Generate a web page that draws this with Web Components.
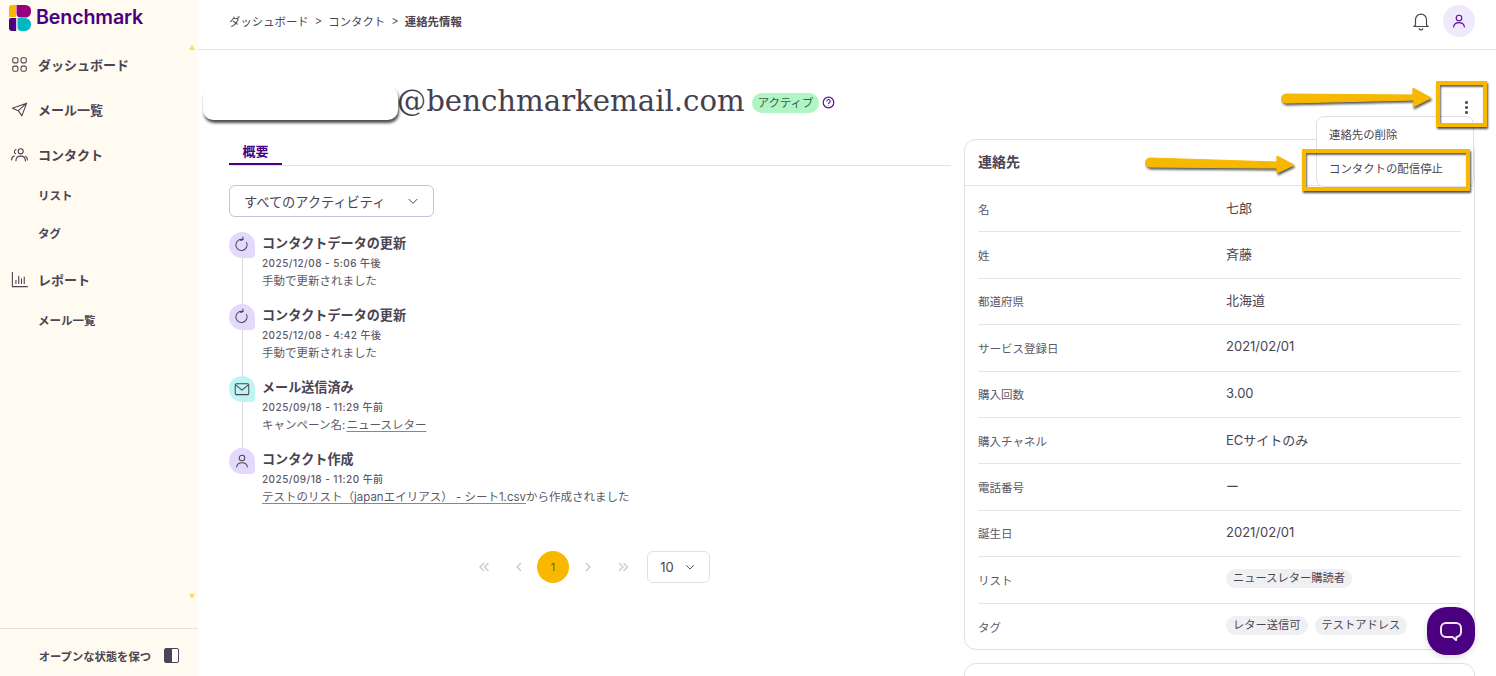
<!DOCTYPE html>
<html lang="ja"><head><meta charset="utf-8"><title>連絡先情報</title>
<style>
html,body{margin:0;padding:0;height:676px;overflow:hidden;background:#fff}
body{font-family:"Inter","Noto Sans CJK JP",sans-serif;color:#4a4453}
</style></head><body>
<app-shell>
  <app-sidebar slot="side"></app-sidebar>
  <app-topbar slot="top"></app-topbar>
  <contact-page slot="main"></contact-page>
</app-shell>
<script>
const I={
grid:'<rect x="3.5" y="3.5" width="6.5" height="6.5" rx="1.8"/><rect x="14" y="3.5" width="6.5" height="6.5" rx="1.8"/><rect x="3.5" y="14" width="6.5" height="6.5" rx="1.8"/><rect x="14" y="14" width="6.5" height="6.5" rx="1.8"/>',
plane:'<path d="M21 4 3 10.5l7.5 3L15 20zM21 4l-10.5 9.5"/>',
users:'<circle cx="13.5" cy="8" r="3.2"/><path d="M7.5 20c0-3.6 2.6-6 6-6s6 2.4 6 6.2M22 19c0-2.2-.7-3.7-2.2-4.7M7.5 5.6A3 3 0 0 0 7 11M2 19c0-2.6 1.2-4.4 3.4-5"/>',
chart:'<path d="M3 3v18h19M7.5 17v-4M11 17V8M14.500 17v-6M18 17V9"/>',
bell:'<path d="M6 16.500V10.500a6 6 0 0 1 12 0v6l1.800 1.500H4.200zM10 20.500a2.200 2.200 0 0 0 4 0"/>',
user:'<circle cx="12" cy="8" r="3.700"/><path d="M4.800 20c.4-3.800 3.400-5.800 7.200-5.800s6.800 2 7.200 5.800"/>',
refresh:'<path d="M18 8.500a7.500 7.500 0 1 1-4.500-3.800M13.200 1.500l.4 3.300L10.300 6"/>',
mail:'<rect x="3" y="5" width="18" height="14.500" rx="1.500"/><path d="m3.500 6.500 8.500 7 8.500-7"/>',
down:'<path d="m6 9.500 6 6 6-6"/>'
};
const svg=(n,s=18,w=1.5,c='currentColor')=>`<svg width="${s}" height="${s}" viewBox="0 0 24 24" fill="none" stroke="${c}" stroke-width="${w}" stroke-linecap="round" stroke-linejoin="round">${I[n]}</svg>`;
function def(name,css,html){
  customElements.define(name,class extends HTMLElement{
    connectedCallback(){
      if(this.shadowRoot)return;
      const r=this.attachShadow({mode:'open'});
      const a=k=>this.getAttribute(k)||'';
      r.innerHTML=`<style>${css}</style>`+(typeof html==='function'?html(a,this):html);
    }
  });
}
def('app-shell',`:host{display:grid;grid-template-columns:198px 1fr;grid-template-rows:50px 626px;width:1496px;height:676px;overflow:hidden}
.s{grid-row:1/3;display:block}`,`<div class="s"><slot name="side"></slot></div><slot name="top"></slot><slot name="main"></slot>`);

def('nav-item',`:host{display:flex;align-items:center;font-size:var(--fs,13px);font-weight:var(--fw,600);color:#4a4453;height:var(--h,45px);padding-left:10px;gap:9px}
.i{width:19px;height:19px;display:flex;flex:none}
:host([sub]){--fs:11.500px;padding-left:38px}
:host([sub]) .i{display:none}`,(a)=>`<span class="i">${a('icon')?svg(a('icon'),19,1.4):''}</span><slot></slot>`);

def('app-sidebar',`:host{display:flex;flex-direction:column;height:676px;background:#fffbf0;position:relative}
.logo{display:flex;align-items:center;gap:5px;height:41px;padding:0 0 0 9px;flex:none;color:#4b0082;font:600 19.700px "Inter",sans-serif;letter-spacing:-.17px}
nav{flex:1;display:flex;flex-direction:column}
.foot{height:48px;border-top:1px solid #e3e0de;display:flex;align-items:center;justify-content:flex-end;gap:13px;padding:6px 19px 0 0;box-sizing:border-box;font-size:11.300px;font-weight:600;color:#4a4453}
.pan{width:15px;height:15px;border:1.500px solid #4a4453;border-radius:2px;background:linear-gradient(90deg,#4a4453 50%,#fff 50%);box-sizing:border-box}
.tri{position:absolute;left:189px;width:0;height:0;border-left:3.500px solid transparent;border-right:3.500px solid transparent}
.up{top:45px;border-bottom:5px solid #ffd966}.dn{top:594px;border-top:5px solid #ffd966}`,`<div class="logo"><svg width="22" height="26" viewBox="0 0 22 26" style="margin-top:-5px;flex:none">
<path d="M0 3a3 3 0 0 1 3-3h4v12H0z" fill="#f9b800"/><path d="M7.500 0h9a5.500 5.500 0 0 1 5.500 5.500V7a5.500 5.500 0 0 1-5.500 5.500h-5A4 4 0 0 1 7.500 8.500z" fill="#98007f"/>
<path d="M0 15a2 2 0 0 1 2-2h5.200v13H3a3 3 0 0 1-3-3z" fill="#4b0082"/><path d="M9 13h7a6 6 0 0 1 6 6v1a6 6 0 0 1-6 6h-3.500a4 4 0 0 1-4-4V13.500z" fill="#00b8c4"/></svg><span style="margin-top:-7px">Benchmark</span></div>
<nav>
<nav-item icon="grid" style="--h:47px">ダッシュボード</nav-item>
<nav-item icon="plane" style="--h:43px">メール一覧</nav-item>
<nav-item icon="users" style="--h:47px">コンタクト</nav-item>
<nav-item sub style="--h:33px;">リスト</nav-item>
<nav-item sub style="--h:44px">タグ</nav-item>
<nav-item icon="chart" style="--h:49px">レポート</nav-item>
<nav-item sub style="--h:32px">メール一覧</nav-item>
</nav>
<div class="foot"><span>オープンな状態を保つ</span><span class="pan"></span></div>
<i class="tri up"></i><i class="tri dn"></i>`);

def('app-topbar',`:host{display:flex;align-items:center;justify-content:space-between;border-bottom:1px solid #e3e3e6;padding:0 21px 0 31px;box-sizing:border-box;height:50px;font-size:11.400px;color:#4a4453}
.c{display:flex;gap:6px;align-items:center;margin-top:-8px}
b{font-weight:600}
.r{display:flex;align-items:center;gap:11px;margin-top:-8px}
.a{width:32px;height:32px;border-radius:50%;background:#efe9fb;color:#5b0f9c;display:flex;align-items:center;justify-content:center}`,
`<div class="c"><span>ダッシュボード</span><span>&gt;</span><span>コンタクト</span><span>&gt;</span><b>連絡先情報</b></div>
<div class="r">${svg('bell',22,1.3)}<span class="a">${svg('user',18,1.5)}</span></div>`);

def('time-item',`:host{display:flex;gap:7px;height:72px}
.col{width:26px;display:flex;flex-direction:column;align-items:center;flex:none}
.ic{width:26px;height:26px;border-radius:50% 50% 14% 50%;display:flex;align-items:center;justify-content:center;background:var(--b,#e3d9fd);flex:none;color:#4a4453}
.ln{flex:1;width:1px;background:#dcdce0}
:host([last]) .ln{display:none}
.t{font-size:13.100px;font-weight:600;line-height:22px;margin-top:0}
.d{font-size:10px;font-weight:500;line-height:18px;letter-spacing:.45px;color:#5d5866}
.x{font-size:11.500px;line-height:18px;color:#5d5866}`,
(a)=>`<div class="col"><span class="ic" style="--b:${a('bg')||'#e3d9fd'}">${svg(a('icon'),18,1.35)}</span><span class="ln"></span></div>
<div><div class="t">${a('title')}</div><div class="d">${a('date')}</div><div class="x"><slot></slot></div></div>`);

def('detail-row',`:host{display:grid;grid-template-columns:248px 1fr;align-items:center;height:46.400px;border-bottom:1px solid #e3e3e6;box-sizing:border-box;font-size:11.500px;color:#5d5866}
.v{font-size:13px;color:#4a4453;display:flex;gap:7px;margin-top:-3px}
:host([last]){border-bottom:0}`,(a)=>`<span>${a('label')}</span><span class="v"><slot></slot></span>`);

def('tag-chip',`:host{display:inline-block;background:#f0f0f2;border-radius:10px;font-size:11.250px;line-height:19px;padding:0 7px;color:#4a4453;white-space:nowrap}`,`<slot></slot>`);

def('pager-bar',`:host{display:flex;align-items:center;justify-content:flex-start;gap:0;height:32px;margin:0;font-size:12px;color:#c4c4ca}
.b{width:35px;display:flex;justify-content:center}
.one{width:32px;height:32px;border-radius:50%;background:#f9b800;color:#7a5a00;display:flex;align-items:center;justify-content:center;font-size:11px;margin:0 1px}
.sel{margin-left:7px;width:63px;height:32px;border:1px solid #e0e0e4;border-radius:6px;box-sizing:border-box;display:flex;align-items:center;justify-content:center;gap:9px;color:#4a4453;font-size:13px}
svg{display:block}`,
`<span class="b"><svg width="14" height="14" viewBox="0 0 14 14" fill="none" stroke="#c8c8ce" stroke-width="1.300"><path d="M7 3 3 7l4 4M11.500 3l-4 4 4 4"/></svg></span>
<span class="b"><svg width="14" height="14" viewBox="0 0 14 14" fill="none" stroke="#c8c8ce" stroke-width="1.300"><path d="M9 3 5 7l4 4"/></svg></span>
<span class="one">1</span>
<span class="b"><svg width="14" height="14" viewBox="0 0 14 14" fill="none" stroke="#c8c8ce" stroke-width="1.300"><path d="m5 3 4 4-4 4"/></svg></span>
<span class="b"><svg width="14" height="14" viewBox="0 0 14 14" fill="none" stroke="#c8c8ce" stroke-width="1.300"><path d="m3 3 4 4-4 4M7.500 3l4 4-4 4"/></svg></span>
<span class="sel">10 ${svg('down',14,1.600)}</span>`);

def('contact-page',`:host{display:block;position:relative;height:626px;overflow:hidden;padding:0 21px 0 31px;box-sizing:border-box}
.h{display:flex;align-items:center;height:89px;gap:7px}
h1{margin:12px 0 0 168px;font:400 29.200px "DejaVu Serif",serif;letter-spacing:0;color:#45404e;white-space:nowrap}
.st{background:#b0f5c4;border-radius:10px;font-size:11.400px;line-height:20px;padding:0 6px;color:#3d5c48;margin-top:17px}
.q{margin:16px 0 0 -4px;display:flex}
.g{display:grid;grid-template-columns:722px 511px;column-gap:13px;align-items:start}
.tabs{border-bottom:1px solid #e3e3e6;height:26px}
.tab{display:inline-block;width:53px;height:26px;text-align:center;box-sizing:border-box;border-bottom:2px solid #4b0082;color:#4b0082;font-weight:600;font-size:13px;line-height:24px}
.sel{margin-top:19px;width:205px;height:32px;border:1px solid #c9bfdc;border-radius:6px;box-sizing:border-box;display:flex;align-items:center;justify-content:space-between;padding:0 12px 0 14px;font-size:13.200px;color:#4a4453}
.tl{margin-top:15px}
.pg{margin-top:31px;padding-left:237px}
u{text-decoration-color:#8a8690;text-underline-offset:2px}
.card{border:1px solid #dfdfe3;border-radius:12px;box-sizing:border-box;height:511px}
.ch{height:46px;border-bottom:1px solid #e3e3e6;box-sizing:border-box;padding:0 13px 3px;display:flex;align-items:center;font-size:14px;font-weight:600;color:#4a4453}
.cb{padding:0 13px}
.card2{border:1px solid #dfdfe3;border-radius:12px;height:60px;margin-top:13px}
.menu{position:absolute;left:1118px;top:66px;width:158px;height:71px;background:#fff;border:1px solid #dfdfe3;border-radius:8px;box-sizing:border-box;font-size:11.400px;color:#4a4453;display:flex;flex-direction:column}
.menu span{height:34px;display:flex;align-items:center;padding-left:12px}
.menu span+span{height:36px}
.yb{position:absolute;border:4px solid #f9b800;box-sizing:border-box;box-shadow:1px 2px 2px rgba(0,0,0,.7),inset 1px 2px 2px rgba(0,0,0,.6)}
.dots{position:absolute;left:1267px;top:51px;display:flex;flex-direction:column;gap:2.500px}
.dots i{width:2.500px;height:2.500px;border-radius:50%;background:#555}
.mask{position:absolute;left:5px;top:36px;width:195px;height:34px;background:#fff;border-radius:10px;box-shadow:1px 3px 3px rgba(0,0,0,.7)}
.arr{position:absolute;filter:drop-shadow(1px 2px 1px rgba(0,0,0,.65))}
.chat{position:absolute;left:1229px;top:557px;width:48px;height:48px;background:#4b0082;border-radius:20px;display:flex;align-items:center;justify-content:center;box-shadow:0 2px 6px rgba(0,0,0,.15)}`,
`<div class="h"><h1>@benchmarkemail.com</h1><span class="st">アクティブ</span>
<span class="q"><svg width="13" height="13" viewBox="0 0 13 13" fill="none" stroke="#5b0f9c" stroke-width="1.200"><circle cx="6.500" cy="6.500" r="5.300"/><path d="M4.800 5.200a1.700 1.700 0 1 1 2.500 1.500c-.6.300-.8.600-.8 1.200M6.500 9.300v.5" stroke-width="1.100"/></svg></span></div>
<div class="g">
<section>
<div class="tabs"><span class="tab">概要</span></div>
<div class="sel"><span>すべてのアクティビティ</span>${svg('down',16,1.500)}</div>
<div class="tl">
<time-item icon="refresh" title="コンタクトデータの更新" date="2025/12/08 - 5:06 午後">手動で更新されました</time-item>
<time-item icon="refresh" title="コンタクトデータの更新" date="2025/12/08 - 4:42 午後">手動で更新されました</time-item>
<time-item icon="mail" bg="#bdf5f2" title="メール送信済み" date="2025/09/18 - 11:29 午前">キャンペーン名: <u style="margin-left:-2px">ニュースレター</u></time-item>
<time-item icon="user" last title="コンタクト作成" date="2025/09/18 - 11:20 午前"><u>テストのリスト（japanエイリアス） - シート1.csv</u>から作成されました</time-item>
</div>
<div class="pg"><pager-bar></pager-bar></div>
</section>
<aside>
<div class="card"><div class="ch">連絡先</div><div class="cb">
<detail-row label="名">七郎</detail-row>
<detail-row label="姓">斉藤</detail-row>
<detail-row label="都道府県">北海道</detail-row>
<detail-row label="サービス登録日">2021/02/01</detail-row>
<detail-row label="購入回数">3.00</detail-row>
<detail-row label="購入チャネル">ECサイトのみ</detail-row>
<detail-row label="電話番号">ー</detail-row>
<detail-row label="誕生日">2021/02/01</detail-row>
<detail-row label="リスト"><tag-chip>ニュースレター購読者</tag-chip></detail-row>
<detail-row label="タグ" last><tag-chip>レター送信可</tag-chip><tag-chip>テストアドレス</tag-chip></detail-row>
</div></div>
<div class="card2"></div>
</aside>
</div>
<div class="mask"></div>
<div class="menu"><span>連絡先の削除</span><span>コンタクトの配信停止</span></div>
<div class="dots"><i></i><i></i><i></i></div>
<div class="yb" style="left:1238px;top:31px;width:51px;height:46px"></div>
<div class="yb" style="left:1104px;top:99px;width:168px;height:42px"></div>
<svg class="arr" style="left:1080px;top:35px" width="158" height="26" viewBox="0 0 158 26"><path d="M8 9 135 10 135 3 153 13 135 22 136 15 8 18A4.500 4.500 0 0 1 8 9Z" fill="#f9b800" stroke="#f9b800" stroke-width="1" stroke-linejoin="round"/></svg>
<svg class="arr" style="left:945px;top:103px" width="156" height="26" viewBox="0 0 156 26"><path d="M7 5 134 9 134 3 151 12 134 20 134 15 7 14A4.500 4.500 0 0 1 7 5Z" fill="#f9b800" stroke="#f9b800" stroke-width="1" stroke-linejoin="round"/></svg>
<div class="chat"><svg width="28" height="28" viewBox="0 0 28 28" fill="none" stroke="#efe6f7" stroke-width="2" stroke-linejoin="round"><path d="M9 6h10a5 5 0 0 1 5 5v4a5 5 0 0 1-4.500 5l-.5 3-3.500-3H9a5 5 0 0 1-5-5v-4a5 5 0 0 1 5-5z"/></svg></div>`);
</script>
</body></html>
